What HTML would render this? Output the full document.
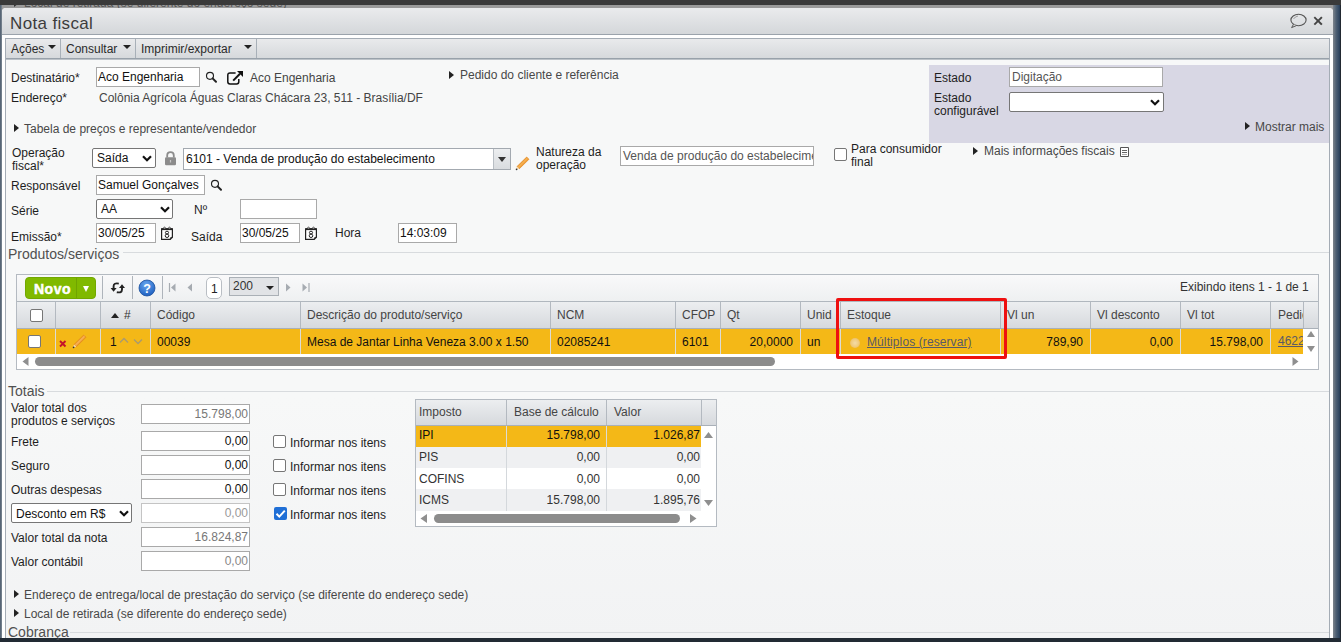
<!DOCTYPE html>
<html><head><meta charset="utf-8">
<style>
*{box-sizing:border-box;margin:0;padding:0}
html,body{width:1341px;height:642px;overflow:hidden}
body{position:relative;background:#3a3a3a;font-family:"Liberation Sans",sans-serif;font-size:12px;color:#1e1e1e}
.a{position:absolute}
.t{position:absolute;white-space:nowrap;line-height:14px;font-size:12px}
.lg{position:absolute;white-space:nowrap;line-height:16px;font-size:14px;color:#505050}
.inp{position:absolute;background:#fff;border:1px solid #a9a9a9}
.sel{position:absolute;background:#fff;border:1px solid #767676;border-radius:2px}
.tri{position:absolute;width:0;height:0;border-top:4.5px solid transparent;border-bottom:4.5px solid transparent;border-left:5px solid #222}
.cb{position:absolute;width:13px;height:13px;border:1px solid #767676;border-radius:2px;background:#fff}
.chev{position:absolute;width:7px;height:7px;border-right:2.2px solid #111;border-bottom:2.2px solid #111;transform:rotate(45deg)}
.gray{color:#555}
</style></head>
<body>
<!-- background overlay bands -->
<div class="a" style="left:0;top:5px;width:1341px;height:10px;background:#9a9a9a"></div>
<div class="a" style="left:0;top:5px;width:1341px;height:3px;overflow:hidden"><div class="t" style="left:24px;top:-9px;color:#555">Local de retirada (se diferente do endereço sede)</div><div class="a" style="left:14px;top:-6px;border-top:4.5px solid transparent;border-bottom:4.5px solid transparent;border-left:5px solid #333"></div></div>
<div class="a" style="left:0;top:5px;width:2px;height:633px;background:linear-gradient(90deg,#4a5a6c,#7e8994)"></div>
<div class="a" style="left:1333px;top:5px;width:8px;height:633px;background:linear-gradient(90deg,#7d848c,#4d5f73 40%,#2e4560 80%,#1c1c1c)"></div>
<div class="a" style="left:0;top:638px;width:1341px;height:4px;background:#222b34"></div>

<!-- dialog -->
<div class="a" id="dlg" style="left:2px;top:8px;width:1331px;height:630px;background:#fff;border-radius:4px 4px 0 0;overflow:hidden">
  <div class="a" style="left:0;top:0;width:1331px;height:27px;background:linear-gradient(#eaebed,#d4d7da);border-bottom:1px solid #9ba3ac"></div>
  <div class="a" style="left:8px;top:6px;font-size:17px;line-height:20px;color:#3c3c3c;letter-spacing:0.35px;white-space:nowrap">Nota fiscal</div>
</div>

<!-- content container -->
<div class="a" id="cont" style="left:5px;top:38px;width:1325px;height:600px;border:1px solid #a4acb5;border-bottom:none;background:#f7f8f8;overflow:hidden">
</div>

<!-- title icons -->
<svg class="a" style="left:1289px;top:13px" width="18" height="16" viewBox="0 0 18 16"><ellipse cx="9.5" cy="7" rx="7.6" ry="5.7" fill="none" stroke="#555" stroke-width="1.1"/><path d="M4.6 11.2 L2.6 14.6 L7.4 12.6" fill="#ddd" stroke="#555" stroke-width="1"/><path d="M4.5 6 Q6 3.6 9 3" fill="none" stroke="#888" stroke-width="0.8"/></svg>
<svg class="a" style="left:1313px;top:16px" width="10" height="10" viewBox="0 0 10 10"><path d="M2 1.8 L8.2 8 M8.2 1.8 L2 8" stroke="#444" stroke-width="1.9" stroke-linecap="square"/></svg>

<!-- menubar -->
<div class="a" style="left:6px;top:39px;width:1323px;height:20px;background:linear-gradient(#e9eaec,#d6d9dc);border-bottom:1px solid #98a1aa;box-shadow:0 1px 0 #bcc2c8"></div>
<div class="a" style="left:60px;top:39px;width:1px;height:19px;background:#a8b0b8"></div>
<div class="a" style="left:135px;top:39px;width:1px;height:19px;background:#a8b0b8"></div>
<div class="a" style="left:256px;top:39px;width:1px;height:19px;background:#a8b0b8"></div>
<div class="t" style="left:11px;top:42px;color:#2a2a2a">Ações</div>
<div class="t" style="left:66px;top:42px;color:#2a2a2a">Consultar</div>
<div class="t" style="left:141px;top:42px;color:#2a2a2a">Imprimir/exportar</div>
<div class="a" style="left:48px;top:45px;border-left:4px solid transparent;border-right:4px solid transparent;border-top:4px solid #222"></div>
<div class="a" style="left:123px;top:45px;border-left:4px solid transparent;border-right:4px solid transparent;border-top:4px solid #222"></div>
<div class="a" style="left:244px;top:45px;border-left:4px solid transparent;border-right:4px solid transparent;border-top:4px solid #222"></div>

<!-- lavender panel -->
<div class="a" style="left:929px;top:65px;width:400px;height:78px;background:#d8d7e4"></div>
<div class="t" style="left:934px;top:71px">Estado</div>
<div class="inp" style="left:1009px;top:67px;width:154px;height:20px"></div>
<div class="t gray" style="left:1012px;top:70px">Digitação</div>
<div class="t" style="left:934px;top:91px">Estado</div>
<div class="t" style="left:934px;top:104px">configurável</div>
<div class="sel" style="left:1009px;top:92px;width:155px;height:20px"></div>
<svg class="a" style="left:1150px;top:99px" width="10" height="7" viewBox="0 0 10 7"><path d="M1 1.2 L5 5.2 L9 1.2" fill="none" stroke="#111" stroke-width="2.2"/></svg>
<div class="tri" style="left:1245px;top:122px"></div>
<div class="t" style="left:1255px;top:120px;color:#484848">Mostrar mais</div>

<!-- Destinatario -->
<div class="t" style="left:11px;top:71px">Destinatário*</div>
<div class="inp" style="left:96px;top:67px;width:104px;height:20px"></div>
<div class="t" style="left:98px;top:70px;color:#111">Aco Engenharia</div>
<svg class="a" style="left:205px;top:71px" width="13" height="13" viewBox="0 0 13 13"><circle cx="5" cy="4.8" r="3.5" fill="none" stroke="#222" stroke-width="1.15"/><path d="M7.6 7.4 L11 10.8" stroke="#222" stroke-width="2" stroke-linecap="round"/></svg>
<svg class="a" style="left:226px;top:70px" width="18" height="16" viewBox="0 0 18 16"><path d="M9.6 3 H4 Q1.8 3 1.8 5.2 V11.8 Q1.8 14 4 14 H10.6 Q12.8 14 12.8 11.8 V9" fill="none" stroke="#111" stroke-width="1.5"/><path d="M7.2 10.6 L14 3.8" stroke="#111" stroke-width="2"/><path d="M11 1 H17 V7 Z" fill="#111"/></svg>
<div class="t" style="left:250px;top:71px;color:#444">Aco Engenharia</div>
<div class="tri" style="left:449px;top:70.5px"></div>
<div class="t" style="left:460px;top:68px;color:#484848">Pedido do cliente e referência</div>
<div class="t" style="left:11px;top:91px">Endereço*</div>
<div class="t" style="left:99px;top:91px;color:#444">Colônia Agrícola Águas Claras Chácara 23, 511 - Brasília/DF</div>
<div class="tri" style="left:14px;top:124px"></div>
<div class="t" style="left:24px;top:122px;color:#484848">Tabela de preços e representante/vendedor</div>
<!-- Operacao fiscal -->
<div class="t" style="left:12px;top:146px">Operação</div>
<div class="t" style="left:12px;top:159px">fiscal*</div>
<div class="sel" style="left:92px;top:148px;width:64px;height:20px"></div>
<div class="t" style="left:97px;top:151px;color:#111">Saída</div>
<svg class="a" style="left:141.5px;top:155px" width="10" height="7" viewBox="0 0 10 7"><path d="M1 1.2 L5 5.2 L9 1.2" fill="none" stroke="#111" stroke-width="2.2"/></svg>
<svg class="a" style="left:164px;top:151px" width="13" height="15" viewBox="0 0 13 15"><path d="M3.2 6.5 V4.5 Q3.2 1.2 6.5 1.2 Q9.8 1.2 9.8 4.5 V6.5" fill="none" stroke="#8c8c8c" stroke-width="1.8"/><rect x="1" y="6.3" width="11" height="8" rx="1.2" fill="#8c8c8c"/><path d="M6.5 9 V11.5" stroke="#c8c8c8" stroke-width="1.2"/></svg>
<div class="inp" style="left:183px;top:148px;width:328px;height:22px;border-color:#a3a9b0"></div>
<div class="t" style="left:186px;top:152px;color:#111">6101 - Venda de produção do estabelecimento</div>
<div class="a" style="left:493px;top:149px;width:17px;height:20px;background:linear-gradient(#eceef0,#d9dcdf);border-left:1px solid #b8bec4"></div>
<div class="a" style="left:498px;top:156.5px;border-left:4.5px solid transparent;border-right:4.5px solid transparent;border-top:5px solid #333"></div>
<svg class="a" style="left:515px;top:156px" width="15" height="15" viewBox="0 0 15 15"><path d="M2.02 10.56 L11.68 1.06 L13.92 3.34 L4.26 12.84 Z" fill="#f3a23a" stroke="#dc7f18" stroke-width="0.7"/><path d="M3.2 11.3 L12.6 2" stroke="#f8c070" stroke-width="0.8"/><path d="M2.02 10.56 L4.26 12.84 L1 13.8 Z" fill="#f6dcb8"/><circle cx="1.6" cy="13.3" r="0.9" fill="#333"/></svg>
<div class="t" style="left:536px;top:145px">Natureza da</div>
<div class="t" style="left:536px;top:158px">operação</div>
<div class="inp" style="left:620px;top:146px;width:194px;height:20px;overflow:hidden"><div class="t gray" style="left:2px;top:2px">Venda de produção do estabelecimento</div></div>
<div class="cb" style="left:834px;top:148px"></div>
<div class="t" style="left:851px;top:142px">Para consumidor</div>
<div class="t" style="left:851px;top:155px">final</div>
<div class="tri" style="left:973px;top:147px"></div>
<div class="t" style="left:984px;top:144px;color:#484848">Mais informações fiscais</div>
<svg class="a" style="left:1120px;top:147px" width="10" height="11" viewBox="0 0 10 11"><path d="M0.5 0.5 H8.5 V9.5 H0.5 Z" fill="#fff" stroke="#555" stroke-width="1"/><path d="M2 3.5 H7 M2 5.5 H7" stroke="#666" stroke-width="1"/><path d="M2 7.5 H7" stroke="#aaa" stroke-width="1"/></svg>

<!-- Responsavel -->
<div class="t" style="left:11px;top:179px">Responsável</div>
<div class="inp" style="left:96px;top:175px;width:109px;height:20px"></div>
<div class="t" style="left:98px;top:178px;color:#111">Samuel Gonçalves</div>
<svg class="a" style="left:210px;top:179px" width="13" height="13" viewBox="0 0 13 13"><circle cx="5" cy="4.8" r="3.5" fill="none" stroke="#222" stroke-width="1.15"/><path d="M7.6 7.4 L11 10.8" stroke="#222" stroke-width="2" stroke-linecap="round"/></svg>

<!-- Serie -->
<div class="t" style="left:11px;top:204px">Série</div>
<div class="sel" style="left:96px;top:199px;width:77px;height:20px"></div>
<div class="t" style="left:101px;top:202px;color:#111">AA</div>
<svg class="a" style="left:159.5px;top:206px" width="10" height="7" viewBox="0 0 10 7"><path d="M1 1.2 L5 5.2 L9 1.2" fill="none" stroke="#111" stroke-width="2.2"/></svg>
<div class="t" style="left:194px;top:203px">Nº</div>
<div class="inp" style="left:240px;top:199px;width:77px;height:20px"></div>

<!-- Emissao -->
<div class="t" style="left:11px;top:230px">Emissão*</div>
<div class="inp" style="left:96px;top:223px;width:60px;height:20px"></div>
<div class="t" style="left:98px;top:226px;color:#111">30/05/25</div>
<svg class="a" style="left:160px;top:226px" width="14" height="15" viewBox="0 0 14 15"><path d="M1.6 2.8 H12.4 V11.2 L10.2 13.4 H1.6 Z" fill="#fff" stroke="#222" stroke-width="1.2"/><path d="M1.6 3.2 H12.4" stroke="#222" stroke-width="1.8"/><circle cx="4.5" cy="2" r="0.9" fill="#fff" stroke="#222" stroke-width="0.7"/><circle cx="9.5" cy="2" r="0.9" fill="#fff" stroke="#222" stroke-width="0.7"/><ellipse cx="7" cy="6.6" rx="1.6" ry="1.4" fill="none" stroke="#222" stroke-width="1"/><ellipse cx="7" cy="9.8" rx="1.8" ry="1.7" fill="none" stroke="#222" stroke-width="1"/><path d="M10.2 13.4 L10.6 11.6 L12.4 11.2" fill="none" stroke="#222" stroke-width="0.9"/></svg>
<div class="t" style="left:191px;top:230px">Saída</div>
<div class="inp" style="left:240px;top:223px;width:60px;height:20px"></div>
<div class="t" style="left:242px;top:226px;color:#111">30/05/25</div>
<svg class="a" style="left:304px;top:226px" width="14" height="15" viewBox="0 0 14 15"><path d="M1.6 2.8 H12.4 V11.2 L10.2 13.4 H1.6 Z" fill="#fff" stroke="#222" stroke-width="1.2"/><path d="M1.6 3.2 H12.4" stroke="#222" stroke-width="1.8"/><circle cx="4.5" cy="2" r="0.9" fill="#fff" stroke="#222" stroke-width="0.7"/><circle cx="9.5" cy="2" r="0.9" fill="#fff" stroke="#222" stroke-width="0.7"/><ellipse cx="7" cy="6.6" rx="1.6" ry="1.4" fill="none" stroke="#222" stroke-width="1"/><ellipse cx="7" cy="9.8" rx="1.8" ry="1.7" fill="none" stroke="#222" stroke-width="1"/><path d="M10.2 13.4 L10.6 11.6 L12.4 11.2" fill="none" stroke="#222" stroke-width="0.9"/></svg>
<div class="t" style="left:335px;top:226px">Hora</div>
<div class="inp" style="left:398px;top:223px;width:59px;height:20px"></div>
<div class="t" style="left:400px;top:226px;color:#111">14:03:09</div>

<!-- Produtos legend -->
<div class="a" style="left:123px;top:252px;width:1206px;height:1px;background:#d8dbde"></div>
<div class="lg" style="left:8px;top:246px">Produtos/serviços</div>
<!-- products table -->
<div class="a" style="left:16px;top:274px;width:1303px;height:96px;border:1px solid #b4bac1;background:#fff"></div>
<div class="a" style="left:17px;top:275px;width:1301px;height:27px;background:linear-gradient(#f9f9fa,#eef0f1);border-bottom:1px solid #b0b7be"></div>
<div class="a" style="left:25px;top:277px;width:71px;height:22px;border-radius:4px;background:#80b900;border:1px solid #72a800"></div>
<div class="a" style="left:76px;top:278px;width:1px;height:20px;background:#70a400"></div>
<div class="a" style="left:34px;top:281px;font-size:14px;line-height:16px;font-weight:bold;color:#fff;letter-spacing:0.5px;-webkit-text-stroke:0.5px #fff;white-space:nowrap">Novo</div>
<div class="a" style="left:83px;top:286px;border-left:3.5px solid transparent;border-right:3.5px solid transparent;border-top:6px solid #fff"></div>
<div class="a" style="left:102px;top:276px;width:1px;height:23px;background:#aeb4bb"></div>
<div class="a" style="left:132px;top:276px;width:1px;height:23px;background:#aeb4bb"></div>
<div class="a" style="left:162px;top:276px;width:1px;height:23px;background:#aeb4bb"></div>
<svg class="a" style="left:110px;top:282px" width="16" height="12" viewBox="0 0 16 12"><path d="M8.8 1.6 Q3.6 0.6 3.6 4.2 V6.5" fill="none" stroke="#222" stroke-width="1.9"/><path d="M0.6 6 H6.6 L3.6 9.8 Z" fill="#222"/><path d="M6.8 10.2 Q12 11.2 12 7.6 V5.5" fill="none" stroke="#222" stroke-width="1.9"/><path d="M9 6 H15 L12 2.2 Z" fill="#222"/></svg>
<svg class="a" style="left:138px;top:279px" width="18" height="18" viewBox="0 0 18 18"><defs><radialGradient id="hg" cx="0.45" cy="0.3" r="0.7"><stop offset="0" stop-color="#6aa8f0"/><stop offset="1" stop-color="#1d5fc0"/></radialGradient></defs><circle cx="9" cy="9" r="8" fill="url(#hg)" stroke="#1a4f9c" stroke-width="0.8"/><text x="9" y="13.6" font-size="12.5" font-weight="bold" text-anchor="middle" fill="#fff" font-family="Liberation Sans">?</text></svg>
<svg class="a" style="left:168px;top:282px" width="9" height="11" viewBox="0 0 9 11"><path d="M1.5 1 V10" stroke="#a6abb1" stroke-width="1.2"/><path d="M7.5 1.5 L3 5.5 L7.5 9.5 Z" fill="#a6abb1"/></svg>
<svg class="a" style="left:186px;top:282px" width="8" height="11" viewBox="0 0 8 11"><path d="M6 1.5 L1.5 5.5 L6 9.5 Z" fill="#a6abb1"/></svg>
<div class="a" style="left:206px;top:277px;width:16px;height:22px;border:1px solid #b9bec4;border-radius:5px;background:#fff"></div>
<div class="t" style="left:211px;top:282px;color:#222">1</div>
<div class="a" style="left:229px;top:277px;width:50px;height:19px;border:1px solid #aab0b6;background:#e1e3e6"></div>
<div class="t" style="left:233px;top:279px;color:#333">200</div>
<div class="a" style="left:266px;top:286px;border-left:4.5px solid transparent;border-right:4.5px solid transparent;border-top:4.5px solid #222"></div>
<svg class="a" style="left:284px;top:282px" width="8" height="11" viewBox="0 0 8 11"><path d="M2 1.5 L6.5 5.5 L2 9.5 Z" fill="#a6abb1"/></svg>
<svg class="a" style="left:301px;top:282px" width="10" height="11" viewBox="0 0 10 11"><path d="M1.5 1.5 L6 5.5 L1.5 9.5 Z" fill="#a6abb1"/><path d="M8 1 V10" stroke="#a6abb1" stroke-width="1.2"/></svg>
<div class="t" style="left:1180px;top:280px;color:#333">Exibindo itens 1 - 1 de 1</div>

<!-- header -->
<div class="a" style="left:17px;top:302px;width:1301px;height:27px;background:linear-gradient(#eceef0,#d6d9dd);border-bottom:1px solid #a9b0b8"></div>
<div class="a" style="left:55px;top:302px;width:1px;height:26px;background:#b3b9c0"></div>
<div class="a" style="left:100px;top:302px;width:1px;height:26px;background:#b3b9c0"></div>
<div class="a" style="left:150px;top:302px;width:1px;height:26px;background:#b3b9c0"></div>
<div class="a" style="left:300px;top:302px;width:1px;height:26px;background:#b3b9c0"></div>
<div class="a" style="left:550px;top:302px;width:1px;height:26px;background:#b3b9c0"></div>
<div class="a" style="left:675px;top:302px;width:1px;height:26px;background:#b3b9c0"></div>
<div class="a" style="left:720px;top:302px;width:1px;height:26px;background:#b3b9c0"></div>
<div class="a" style="left:800px;top:302px;width:1px;height:26px;background:#b3b9c0"></div>
<div class="a" style="left:840px;top:302px;width:1px;height:26px;background:#b3b9c0"></div>
<div class="a" style="left:1000px;top:302px;width:1px;height:26px;background:#b3b9c0"></div>
<div class="a" style="left:1090px;top:302px;width:1px;height:26px;background:#b3b9c0"></div>
<div class="a" style="left:1180px;top:302px;width:1px;height:26px;background:#b3b9c0"></div>
<div class="a" style="left:1270px;top:302px;width:1px;height:26px;background:#b3b9c0"></div>
<div class="a" style="left:1303px;top:302px;width:1px;height:26px;background:#b3b9c0"></div>
<div class="cb" style="left:30px;top:309px"></div>
<div class="a" style="left:111px;top:313px;border-left:4.5px solid transparent;border-right:4.5px solid transparent;border-bottom:5px solid #222"></div>
<div class="t" style="left:124px;top:308px;color:#333">#</div>
<div class="t" style="left:157px;top:308px;color:#444">Código</div>
<div class="t" style="left:307px;top:308px;color:#444">Descrição do produto/serviço</div>
<div class="t" style="left:557px;top:308px;color:#444">NCM</div>
<div class="t" style="left:682px;top:308px;color:#444">CFOP</div>
<div class="t" style="left:727px;top:308px;color:#444">Qt</div>
<div class="t" style="left:807px;top:308px;color:#444">Unid</div>
<div class="t" style="left:847px;top:308px;color:#444">Estoque</div>
<div class="t" style="left:1007px;top:308px;color:#444">Vl un</div>
<div class="t" style="left:1097px;top:308px;color:#444">Vl desconto</div>
<div class="t" style="left:1187px;top:308px;color:#444">Vl tot</div>
<div class="a" style="left:1271px;top:302px;width:32px;height:26px;overflow:hidden"><div class="t" style="left:7px;top:6px;color:#444">Pedido</div></div>

<!-- data row -->
<div class="a" style="left:17px;top:329px;width:1286px;height:25px;background:#f4b817"></div>
<div class="a" style="left:55px;top:329px;width:1px;height:25px;background:#dcdcd6"></div>
<div class="a" style="left:100px;top:329px;width:1px;height:25px;background:#dcdcd6"></div>
<div class="a" style="left:150px;top:329px;width:1px;height:25px;background:#dcdcd6"></div>
<div class="a" style="left:300px;top:329px;width:1px;height:25px;background:#dcdcd6"></div>
<div class="a" style="left:550px;top:329px;width:1px;height:25px;background:#dcdcd6"></div>
<div class="a" style="left:675px;top:329px;width:1px;height:25px;background:#dcdcd6"></div>
<div class="a" style="left:720px;top:329px;width:1px;height:25px;background:#dcdcd6"></div>
<div class="a" style="left:800px;top:329px;width:1px;height:25px;background:#dcdcd6"></div>
<div class="a" style="left:840px;top:329px;width:1px;height:25px;background:#dcdcd6"></div>
<div class="a" style="left:1000px;top:329px;width:1px;height:25px;background:#dcdcd6"></div>
<div class="a" style="left:1090px;top:329px;width:1px;height:25px;background:#dcdcd6"></div>
<div class="a" style="left:1180px;top:329px;width:1px;height:25px;background:#dcdcd6"></div>
<div class="a" style="left:1270px;top:329px;width:1px;height:25px;background:#dcdcd6"></div>
<div class="cb" style="left:28px;top:335px"></div>
<svg class="a" style="left:58px;top:339px" width="9" height="9" viewBox="0 0 9 9"><path d="M2 2 L7.5 7.5 M7.5 2 L2 7.5" stroke="#c4122a" stroke-width="1.9"/></svg>
<svg class="a" style="left:72px;top:334px" width="15" height="15" viewBox="0 0 15 15"><path d="M2.02 10.56 L11.68 1.06 L13.92 3.34 L4.26 12.84 Z" fill="#f3a23a" stroke="#dc7f18" stroke-width="0.7"/><path d="M3.2 11.3 L12.6 2" stroke="#f8c070" stroke-width="0.8"/><path d="M2.02 10.56 L4.26 12.84 L1 13.8 Z" fill="#f6dcb8"/><circle cx="1.6" cy="13.3" r="0.9" fill="#333"/></svg>
<div class="t" style="left:110px;top:335px;color:#111">1</div>
<svg class="a" style="left:119px;top:337px" width="10" height="7" viewBox="0 0 10 7"><path d="M1 5.5 L5 1.5 L9 5.5" fill="none" stroke="#a89a70" stroke-width="1.3"/></svg>
<svg class="a" style="left:133px;top:338px" width="10" height="7" viewBox="0 0 10 7"><path d="M1 1.5 L5 5.5 L9 1.5" fill="none" stroke="#a89a70" stroke-width="1.3"/></svg>
<div class="t" style="left:157px;top:335px;color:#111">00039</div>
<div class="t" style="left:307px;top:335px;color:#111">Mesa de Jantar Linha Veneza 3.00 x 1.50</div>
<div class="t" style="left:557px;top:335px;color:#111">02085241</div>
<div class="t" style="left:682px;top:335px;color:#111">6101</div>
<div class="t" style="left:693px;top:335px;width:100px;text-align:right;color:#111">20,0000</div>
<div class="t" style="left:807px;top:335px;color:#111">un</div>
<div class="a" style="left:850px;top:338px;width:10px;height:10px;border-radius:50%;background:radial-gradient(circle,#f4dba8 0%,#f0cc80 50%,#e8b048 100%)"></div>
<div class="t" style="left:867px;top:335px;letter-spacing:0.1px;color:#5a5a66;text-decoration:underline">Múltiplos (reservar)</div>
<div class="t" style="left:983px;top:335px;width:100px;text-align:right;color:#111">789,90</div>
<div class="t" style="left:1073px;top:335px;width:100px;text-align:right;color:#111">0,00</div>
<div class="t" style="left:1163px;top:335px;width:100px;text-align:right;color:#111">15.798,00</div>
<div class="a" style="left:1271px;top:329px;width:32px;height:25px;overflow:hidden"><div class="t" style="left:7px;top:5px;color:#5a5a66;text-decoration:underline">46221</div></div>
<svg class="a" style="left:1306px;top:330px" width="10" height="8" viewBox="0 0 10 8"><path d="M1 7 L5 1 L9 7 Z" fill="#8f8f8f"/></svg>
<svg class="a" style="left:1306px;top:345px" width="10" height="8" viewBox="0 0 10 8"><path d="M1 1 L5 7 L9 1 Z" fill="#8f8f8f"/></svg>
<!-- h scroll -->
<svg class="a" style="left:21px;top:356px" width="9" height="11" viewBox="0 0 9 11"><path d="M7.5 1 L1.5 5.5 L7.5 10 Z" fill="#8f8f8f"/></svg>
<div class="a" style="left:35px;top:357px;width:740px;height:9px;border-radius:5px;background:#8c8c8c"></div>
<svg class="a" style="left:1291px;top:356px" width="9" height="11" viewBox="0 0 9 11"><path d="M1.5 1 L7.5 5.5 L1.5 10 Z" fill="#8f8f8f"/></svg>
<!-- red highlight -->
<div class="a" style="left:836px;top:298px;width:171px;height:61px;border:3px solid #ee1010;border-radius:2px"></div>
<!-- Totais -->
<div class="a" style="left:6px;top:370px;width:1323px;height:268px;background:linear-gradient(#f7f8f8 0%,#f7f8f8 10%,#f2f3f4 100%)"></div>
<div class="a" style="left:47px;top:391px;width:1282px;height:1px;background:#d8dbde"></div>
<div class="lg" style="left:8px;top:383px">Totais</div>
<div class="t" style="left:11px;top:401px">Valor total dos</div>
<div class="t" style="left:11px;top:414px">produtos e serviços</div>
<div class="inp" style="left:141px;top:404px;width:109px;height:20px"></div>
<div class="t gray" style="left:141px;top:407px;width:107px;text-align:right;color:#777">15.798,00</div>
<div class="t" style="left:11px;top:435px">Frete</div>
<div class="inp" style="left:141px;top:431px;width:109px;height:20px"></div>
<div class="t" style="left:141px;top:434px;width:107px;text-align:right;color:#111">0,00</div>
<div class="cb" style="left:273px;top:435px"></div>
<div class="t" style="left:290px;top:436px">Informar nos itens</div>
<div class="t" style="left:11px;top:459px">Seguro</div>
<div class="inp" style="left:141px;top:455px;width:109px;height:20px"></div>
<div class="t" style="left:141px;top:458px;width:107px;text-align:right;color:#111">0,00</div>
<div class="cb" style="left:273px;top:459px"></div>
<div class="t" style="left:290px;top:460px">Informar nos itens</div>
<div class="t" style="left:11px;top:483px">Outras despesas</div>
<div class="inp" style="left:141px;top:479px;width:109px;height:20px"></div>
<div class="t" style="left:141px;top:482px;width:107px;text-align:right;color:#111">0,00</div>
<div class="cb" style="left:273px;top:483px"></div>
<div class="t" style="left:290px;top:484px">Informar nos itens</div>
<div class="sel" style="left:11px;top:503px;width:121px;height:20px"></div>
<div class="t" style="left:16px;top:507px;color:#111">Desconto em R$</div>
<svg class="a" style="left:118.5px;top:510px" width="10" height="7" viewBox="0 0 10 7"><path d="M1 1.2 L5 5.2 L9 1.2" fill="none" stroke="#111" stroke-width="2.2"/></svg>
<div class="inp" style="left:141px;top:503px;width:109px;height:20px;border-color:#c4c4c4"></div>
<div class="t" style="left:141px;top:506px;width:107px;text-align:right;color:#999">0,00</div>
<div class="a" style="left:274px;top:507px;width:13px;height:13px;border-radius:2px;background:#1f6fd6"></div>
<svg class="a" style="left:274px;top:507px" width="13" height="13" viewBox="0 0 13 13"><path d="M2.5 6.8 L5.3 9.6 L10.8 3.6" fill="none" stroke="#fff" stroke-width="2"/></svg>
<div class="t" style="left:290px;top:508px">Informar nos itens</div>
<div class="t" style="left:11px;top:531px">Valor total da nota</div>
<div class="inp" style="left:141px;top:527px;width:109px;height:20px"></div>
<div class="t" style="left:141px;top:530px;width:107px;text-align:right;color:#777">16.824,87</div>
<div class="t" style="left:11px;top:555px">Valor contábil</div>
<div class="inp" style="left:141px;top:551px;width:109px;height:20px"></div>
<div class="t" style="left:141px;top:554px;width:107px;text-align:right;color:#888">0,00</div>

<!-- tax table -->
<div class="a" style="left:415px;top:399px;width:302px;height:128px;border:1px solid #b4bac1;background:#fff"></div>
<div class="a" style="left:416px;top:400px;width:300px;height:26px;background:linear-gradient(#eceef0,#d6d9dd);border-bottom:1px solid #a9b0b8"></div>
<div class="a" style="left:506px;top:400px;width:1px;height:25px;background:#b3b9c0"></div>
<div class="a" style="left:606px;top:400px;width:1px;height:25px;background:#b3b9c0"></div>
<div class="a" style="left:701px;top:400px;width:1px;height:25px;background:#b3b9c0"></div>
<div class="t" style="left:419px;top:405px;color:#444">Imposto</div>
<div class="t" style="left:514px;top:405px;color:#444">Base de cálculo</div>
<div class="t" style="left:614px;top:405px;color:#444">Valor</div>
<div class="a" style="left:416px;top:426px;width:285px;height:21px;background:#f4b817"></div>
<div class="a" style="left:416px;top:447px;width:285px;height:21px;background:#eff0f2"></div>
<div class="a" style="left:416px;top:489px;width:285px;height:22px;background:#eff0f2"></div>
<div class="a" style="left:506px;top:426px;width:1px;height:85px;background:#d4d8dc"></div>
<div class="a" style="left:606px;top:426px;width:1px;height:85px;background:#d4d8dc"></div>
<div class="a" style="left:506px;top:426px;width:1px;height:21px;background:#dcdcd6"></div>
<div class="a" style="left:606px;top:426px;width:1px;height:21px;background:#dcdcd6"></div>
<div class="t" style="left:419px;top:428px;color:#111">IPI</div>
<div class="t" style="left:500px;top:428px;width:100px;text-align:right;color:#111">15.798,00</div>
<div class="t" style="left:600px;top:428px;width:100px;text-align:right;color:#111">1.026,87</div>
<div class="t" style="left:419px;top:450px;color:#333">PIS</div>
<div class="t" style="left:500px;top:450px;width:100px;text-align:right;color:#333">0,00</div>
<div class="t" style="left:600px;top:450px;width:100px;text-align:right;color:#333">0,00</div>
<div class="t" style="left:419px;top:472px;color:#333">COFINS</div>
<div class="t" style="left:500px;top:472px;width:100px;text-align:right;color:#333">0,00</div>
<div class="t" style="left:600px;top:472px;width:100px;text-align:right;color:#333">0,00</div>
<div class="t" style="left:419px;top:493px;color:#333">ICMS</div>
<div class="t" style="left:500px;top:493px;width:100px;text-align:right;color:#333">15.798,00</div>
<div class="t" style="left:600px;top:493px;width:100px;text-align:right;color:#333">1.895,76</div>
<svg class="a" style="left:703px;top:431px" width="11" height="8" viewBox="0 0 11 8"><path d="M1 7 L5.5 1 L10 7 Z" fill="#8f8f8f"/></svg>
<svg class="a" style="left:703px;top:499px" width="11" height="8" viewBox="0 0 11 8"><path d="M1 1 L5.5 7 L10 1 Z" fill="#8f8f8f"/></svg>
<svg class="a" style="left:419px;top:513px" width="10" height="11" viewBox="0 0 10 11"><path d="M8 1 L1.5 5.5 L8 10 Z" fill="#8f8f8f"/></svg>
<div class="a" style="left:434px;top:514px;width:246px;height:9px;border-radius:5px;background:#8c8c8c"></div>
<svg class="a" style="left:688px;top:513px" width="10" height="11" viewBox="0 0 10 11"><path d="M2 1 L8.5 5.5 L2 10 Z" fill="#8f8f8f"/></svg>

<!-- bottom links -->
<div class="tri" style="left:14px;top:589.5px"></div>
<div class="t" style="left:24px;top:588px;color:#484848">Endereço de entrega/local de prestação do serviço (se diferente do endereço sede)</div>
<div class="tri" style="left:14px;top:608.5px"></div>
<div class="t" style="left:24px;top:607px;color:#484848">Local de retirada (se diferente do endereço sede)</div>
<div class="a" style="left:70px;top:632px;width:1259px;height:1px;background:#d8dbde"></div>
<div class="lg" style="left:8px;top:624px">Cobrança</div>
</body></html>
